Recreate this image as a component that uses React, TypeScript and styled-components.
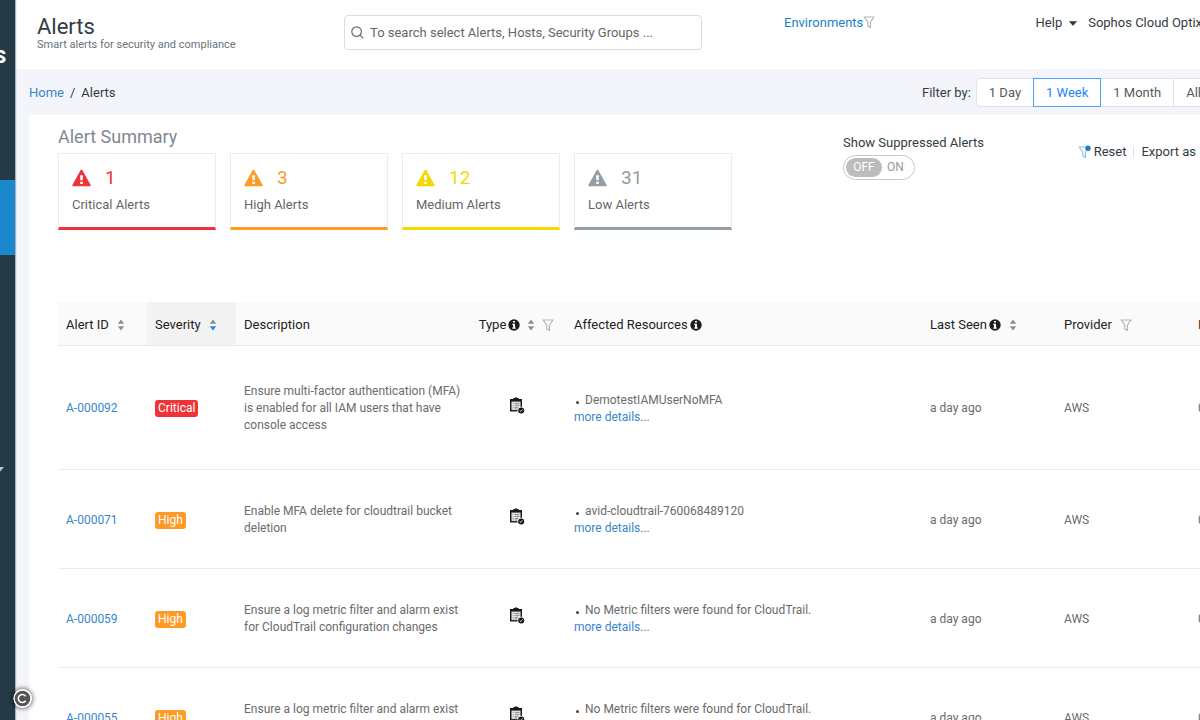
import React, { useState } from "react";
import styled, { createGlobalStyle } from "styled-components";

const GlobalStyle = createGlobalStyle`
  *, *::before, *::after { box-sizing: border-box; }
  html, body { margin: 0; background: #f3f5fa; overflow: hidden; }
  body { font-family: Roboto, "Liberation Sans", sans-serif; font-size: 13px; color: #333c44; }
  button, input { font: inherit; color: inherit; }
  a { color: #3886cb; text-decoration: none; }
  h1, h2, p, ul { margin: 0; padding: 0; font-weight: 400; }
`;

const Shell = styled.div`
  display: flex;
  height: 100vh;
  overflow: hidden;
`;

const Sidebar = styled.nav`
  flex: 0 0 15px;
  display: flex;
  flex-direction: column;
  overflow: hidden;
  background: #243a47;
  box-shadow: 1px 0 1px #a9b2bb;
  z-index: 1;
`;

const Brand = styled.div`
  height: 180px;
  padding: 45px 9px 0 0;
  display: flex;
  justify-content: flex-end;
  color: #fff;
  font-size: 18px;
  line-height: 24px;
  font-weight: 900;
`;

const ActiveItem = styled.a`
  height: 75px;
  background: #1b87cc;
`;

const SideCaret = styled.svg`
  width: 10px;
  height: 6px;
  margin: 212px 0 0 -6px;
`;

const Main = styled.main`
  flex: 0 0 auto;
  width: calc(100% + 33px);
`;

const Header = styled.header`
  display: flex;
  height: 69px;
  padding: 15px 31px 0 22px;
  background: #fff;
`;

const TitleBlock = styled.div`
  flex: 0 0 307px;
`;

const Title = styled.h1`
  font-size: 22px;
  line-height: 24px;
`;

const Subtitle = styled.p`
  font-size: 11px;
  line-height: 12px;
  color: #6b737b;
`;

const SearchBox = styled.label`
  flex: 0 1 358px;
  display: flex;
  align-items: center;
  gap: 6px;
  height: 35px;
  padding: 0 6px;
  border: 1px solid #dcdcdc;
  border-radius: 4px;
`;

const SearchInput = styled.input`
  flex: 1;
  min-width: 0;
  padding: 0;
  border: 0;
  outline: 0;
  background: none;
  &::placeholder { color: #666; opacity: 1; }
`;

const EnvironmentLink = styled.a`
  display: flex;
  height: 16px;
  line-height: 16px;
  margin-left: 82px;
  color: #1b7fc9;
`;

const HeaderMenu = styled.div`
  display: flex;
  gap: 11px;
  height: 16px;
  margin-left: auto;
`;

const MenuButton = styled.button`
  display: flex;
  align-items: center;
  gap: 7px;
  padding: 0;
  border: 0;
  background: none;
  line-height: 16px;
  white-space: nowrap;
`;

const CrumbBar = styled.div`
  display: flex;
  align-items: center;
  justify-content: space-between;
  height: 46px;
  padding: 0 34px 0 14px;
`;

const Crumbs = styled.nav`
  display: flex;
  gap: 6px;
`;

const FilterGroup = styled.div`
  display: flex;
  align-items: center;
  gap: 6px;
`;

const Segments = styled.div`
  display: flex;
`;

const Segment = styled.button<{ $active?: boolean }>`
  height: 29px;
  padding: 0 12px;
  margin-left: -1px;
  border: 1px solid ${(p) => (p.$active ? "#4da3ff" : "#e0e2e6")};
  background: #fff;
  color: ${(p) => (p.$active ? "#1f86f7" : "#595959")};
  position: relative;
  z-index: ${(p) => (p.$active ? 1 : 0)};
  &:first-child { border-radius: 4px 0 0 4px; }
  &:last-child { border-radius: 0 4px 4px 0; }
`;

const Panel = styled.section`
  margin-left: 14px;
  padding: 11px 0 0 29px;
  background: #fff;
`;

const Overview = styled.div`
  display: flex;
  padding-right: 52px;
`;

const Summary = styled.div`
  flex: 0 0 785px;
`;

const SummaryTitle = styled.h2`
  font-size: 18px;
  line-height: 22px;
  margin-bottom: 5px;
  color: #7f8890;
`;

const Cards = styled.div`
  display: flex;
  gap: 14px;
`;

const Card = styled.div<{ $color: string }>`
  width: 158px;
  height: 77px;
  padding: 13px 13px 0;
  border: 1px solid #ececec;
  border-bottom: 3px solid ${(p) => p.$color};
  color: ${(p) => p.$color};
`;

const CardCount = styled.div`
  display: flex;
  align-items: center;
  gap: 14px;
  font-size: 19px;
  line-height: 22px;
`;

const CardLabel = styled.div`
  margin-top: 7px;
  line-height: 18px;
  color: #666;
`;

const Suppressed = styled.label`
  padding-top: 8px;
  line-height: 18px;
`;

const SwitchTrack = styled.span`
  display: flex;
  align-items: center;
  width: 72px;
  height: 25px;
  margin-top: 3px;
  padding: 2px;
  border: 1px solid #c8c8c8;
  border-radius: 13px;
  font-size: 12px;
`;

const SwitchInput = styled.input`
  position: absolute;
  opacity: 0;
`;

const SwitchOption = styled.span<{ $on: boolean }>`
  flex: ${(p) => (p.$on ? "0 0 36px" : "0 0 27px")};
  height: 19px;
  line-height: 19px;
  border-radius: 10px;
  text-align: center;
  background: ${(p) => (p.$on ? "#bcbcbc" : "none")};
  color: ${(p) => (p.$on ? "#fff" : "#999")};
`;

const Actions = styled.div`
  display: flex;
  align-items: center;
  height: 16px;
  margin: 18px 0 0 auto;
`;

const Divider = styled.span`
  width: 1px;
  height: 12px;
  margin: 0 7px;
  background: #e4e4e4;
`;

const ActionButton = styled(MenuButton)`
  gap: 3px;
`;

const Table = styled.table`
  width: 100%;
  margin-top: 72px;
  table-layout: fixed;
  border-collapse: separate;
  border-spacing: 0;
`;

const Th = styled.th<{ $width?: number; $sorted?: boolean }>`
  width: ${(p) => (p.$width ? `${p.$width}px` : "auto")};
  height: 44px;
  padding: 2px 8px 0;
  text-align: left;
  font-weight: 400;
  color: #222;
  background: ${(p) => (p.$sorted ? "#f3f3f3" : "#fafafa")};
  border-bottom: 1px solid #e9e9e9;
  white-space: nowrap;
  overflow: hidden;
`;

const HeadCell = styled.div<{ $center?: boolean; $gap?: number }>`
  display: flex;
  align-items: center;
  justify-content: ${(p) => (p.$center ? "center" : "flex-start")};
  gap: ${(p) => p.$gap ?? 8}px;
`;

const WithInfo = styled.span`
  display: flex;
  align-items: center;
  gap: 2px;
`;

const Td = styled.td<{ $tall?: boolean }>`
  height: ${(p) => (p.$tall ? 124 : 99)}px;
  padding: 2px 0 0 8px;
  font-size: 12px;
  line-height: 17px;
  color: #6b6b6b;
  border-bottom: 1px solid #ececec;
  overflow: hidden;
`;

const IconTd = styled(Td)`
  padding: 0;
  text-align: center;
`;

const Description = styled.p`
  max-width: 222px;
`;

const Tag = styled.span<{ $color: string }>`
  display: inline-block;
  height: 17px;
  padding: 0 3px;
  border-radius: 3px;
  background: ${(p) => p.$color};
  color: #fff;
  vertical-align: middle;
`;

const Resources = styled.ul`
  list-style: none;
`;

const Resource = styled.li`
  display: flex;
  align-items: center;
  gap: 6px;
  &::before {
    content: "";
    width: 3px;
    height: 3px;
    margin: 4px 0 0 2px;
    border-radius: 50%;
    background: #444;
  }
`;

const Copyright = styled.div`
  position: fixed;
  left: 13px;
  bottom: 12px;
  z-index: 2;
`;

const CopyrightMark = styled.svg`
  display: block;
  border-radius: 50%;
  box-shadow: 0 0 4px 1px rgba(0, 0, 0, 0.55);
`;

const Funnel = ({ color = "#b5b5b5", dot = false }: { color?: string; dot?: boolean }) => (
  <svg width="13" height="14" viewBox="0 0 13 14" fill="none" aria-hidden="true">
    <path d="M1.2 2h9.8L7.5 7v5.6L4.8 11V7z" stroke={color} strokeWidth="1.2" strokeLinejoin="round" />
    {dot && <circle cx="10" cy="3.3" r="2.7" fill="#1b7fc9" />}
  </svg>
);

const Sorter = ({ desc = false }: { desc?: boolean }) => (
  <svg width="8" height="12" viewBox="0 0 8 12" aria-hidden="true">
    <path d="M4 .6 7.2 4.8H.8z" fill="#8c8c8c" />
    <path d="M4 11.4 7.2 7.2H.8z" fill={desc ? "#1f86f7" : "#8c8c8c"} />
  </svg>
);

const Info = () => (
  <svg width="12" height="12" viewBox="0 0 12 12" aria-hidden="true">
    <circle cx="6" cy="6" r="5.7" fill="#1d1d1d" />
    <path d="M5 1.9h2v1.7H5zM4.3 4.8H7v3.6h.8v1.3H4.3V8.4H5V6.1h-.7z" fill="#fff" />
  </svg>
);

const Warning = () => (
  <svg width="19" height="18" viewBox="0 0 19 18" aria-hidden="true">
    <path d="M9.5 1.4 17.8 16.4H1.2z" fill="currentColor" stroke="currentColor" strokeWidth="1.8" strokeLinejoin="round" />
    <path d="M8 6.2h3l-.4 5.1H8.4zM8.2 12.7h2.6v2.4H8.2z" fill="#fff" />
  </svg>
);

const Caret = () => (
  <svg width="8" height="5" viewBox="0 0 8 5" aria-hidden="true">
    <path d="M.4.4h7.2L4 4.6z" fill="#243a47" stroke="#243a47" strokeWidth=".6" strokeLinejoin="round" />
  </svg>
);

const SearchIcon = () => (
  <svg width="13" height="13" viewBox="0 0 13 13" fill="none" stroke="#6d6d6d" strokeWidth="1.2" aria-hidden="true">
    <circle cx="5.6" cy="5.6" r="4.8" />
    <path d="m9 9 3.4 3.4" />
  </svg>
);

const Clipboard = () => (
  <svg width="16" height="17" viewBox="0 0 16 17" aria-label="Compliance alert" role="img">
    <path d="M1 2h3.4V1h1.4a1.3 1.3 0 0 1 2.4 0h1.4v1H13v12.5H1z" fill="#1a1a1a" />
    <path d="M2.5 4.6h9v8.5h-9z" fill="#efefef" />
    <path d="M3.6 6.3h1M5.6 6.3h5M3.6 8.3h1M5.6 8.3h5M3.6 10.3h1M5.6 10.3h4M3.6 12h1M5.6 12h3" stroke="#666" strokeWidth=".8" />
    <circle cx="12.2" cy="13.4" r="3.7" fill="#fff" />
    <circle cx="12.2" cy="13.4" r="3" fill="#111" />
    <path d="m10.7 13.5 1.1 1 1.9-2.1" fill="none" stroke="#fff" strokeWidth=".9" />
  </svg>
);

const severityColors = { Critical: "#ee3439", High: "#ff9a26", Medium: "#f5d800", Low: "#929da5" };

const cards = [
  { level: "Critical", count: 1 },
  { level: "High", count: 3 },
  { level: "Medium", count: 12 },
  { level: "Low", count: 31 },
] as const;

const alerts = [
  { id: "A-000092", severity: "Critical", text: "Ensure multi-factor authentication (MFA) is enabled for all IAM users that have console access", resource: "DemotestIAMUserNoMFA", tall: true },
  { id: "A-000071", severity: "High", text: "Enable MFA delete for cloudtrail bucket deletion", resource: "avid-cloudtrail-760068489120" },
  { id: "A-000059", severity: "High", text: "Ensure a log metric filter and alarm exist for CloudTrail configuration changes", resource: "No Metric filters were found for CloudTrail." },
  { id: "A-000055", severity: "High", text: "Ensure a log metric filter and alarm exist for CloudTrail configuration changes", resource: "No Metric filters were found for CloudTrail." },
] as { id: string; severity: "Critical" | "High"; text: string; resource: string; tall?: boolean }[];

const periods = ["1 Day", "1 Week", "1 Month", "All"];

export default function App() {
  const [period, setPeriod] = useState("1 Week");
  const [suppressed, setSuppressed] = useState(false);

  return (
    <>
      <GlobalStyle />
      <Shell>
        <Sidebar aria-label="Main">
          <Brand>S</Brand>
          <ActiveItem href="#alerts" aria-label="Alerts" />
          <SideCaret viewBox="0 0 10 6" aria-hidden="true">
            <path d="M0 0h10L5 6z" fill="#b9c0c5" />
          </SideCaret>
        </Sidebar>
        <Main>
          <Header>
            <TitleBlock>
              <Title>Alerts</Title>
              <Subtitle>Smart alerts for security and compliance</Subtitle>
            </TitleBlock>
            <SearchBox>
              <SearchIcon />
              <SearchInput aria-label="Search" placeholder="To search select Alerts, Hosts, Security Groups ..." />
            </SearchBox>
            <EnvironmentLink href="#environments">
              Environments
              <Funnel />
            </EnvironmentLink>
            <HeaderMenu>
              <MenuButton>Help <Caret /></MenuButton>
              <MenuButton>Sophos Cloud Optix <Caret /></MenuButton>
            </HeaderMenu>
          </Header>
          <CrumbBar>
            <Crumbs aria-label="Breadcrumb">
              <a href="#home">Home</a>
              <span>/</span>
              <span>Alerts</span>
            </Crumbs>
            <FilterGroup>
              <span>Filter by:</span>
              <Segments>
                {periods.map((p) => (
                  <Segment key={p} $active={p === period} onClick={() => setPeriod(p)}>{p}</Segment>
                ))}
              </Segments>
            </FilterGroup>
          </CrumbBar>
          <Panel>
            <Overview>
              <Summary>
                <SummaryTitle>Alert Summary</SummaryTitle>
                <Cards>
                  {cards.map((c) => (
                    <Card key={c.level} $color={severityColors[c.level]}>
                      <CardCount><Warning />{c.count}</CardCount>
                      <CardLabel>{c.level} Alerts</CardLabel>
                    </Card>
                  ))}
                </Cards>
              </Summary>
              <Suppressed>
                Show Suppressed Alerts
                <SwitchInput type="checkbox" checked={suppressed} onChange={(e) => setSuppressed(e.target.checked)} />
                <SwitchTrack>
                  <SwitchOption $on={!suppressed}>OFF</SwitchOption>
                  <SwitchOption $on={suppressed}>ON</SwitchOption>
                </SwitchTrack>
              </Suppressed>
              <Actions>
                <ActionButton><Funnel color="#8fbfe3" dot />Reset</ActionButton>
                <Divider />
                <ActionButton>Export as</ActionButton>
              </Actions>
            </Overview>
            <Table>
              <thead>
                <tr>
                  <Th $width={89}><HeadCell>Alert ID <Sorter /></HeadCell></Th>
                  <Th $width={89} $sorted><HeadCell>Severity <Sorter desc /></HeadCell></Th>
                  <Th $width={232}>Description</Th>
                  <Th $width={98}><HeadCell $center $gap={7}><WithInfo>Type <Info /></WithInfo><Sorter /><Funnel /></HeadCell></Th>
                  <Th $width={356}><WithInfo>Affected Resources <Info /></WithInfo></Th>
                  <Th $width={134}><HeadCell><WithInfo>Last Seen <Info /></WithInfo><Sorter /></HeadCell></Th>
                  <Th $width={134}><HeadCell>Provider <Funnel /></HeadCell></Th>
                  <Th>I</Th>
                </tr>
              </thead>
              <tbody>
                {alerts.map((a) => (
                  <tr key={a.id}>
                    <Td $tall={a.tall}><a href={`#${a.id}`}>{a.id}</a></Td>
                    <Td><Tag $color={severityColors[a.severity]}>{a.severity}</Tag></Td>
                    <Td><Description>{a.text}</Description></Td>
                    <IconTd><Clipboard /></IconTd>
                    <Td>
                      <Resources><Resource>{a.resource}</Resource></Resources>
                      <a href={`#${a.id}-details`}>more details...</a>
                    </Td>
                    <Td>a day ago</Td>
                    <Td>AWS</Td>
                    <Td>0</Td>
                  </tr>
                ))}
              </tbody>
            </Table>
          </Panel>
        </Main>
        <Copyright>
          <CopyrightMark width="19" height="19" viewBox="0 0 19 19" role="img" aria-label="Copyright">
            <circle cx="9.5" cy="9.5" r="8.5" fill="#555" stroke="#fff" strokeWidth="1.4" />
            <path d="M12.6 7.2a4 4 0 1 0 0 4.6" fill="none" stroke="#fff" strokeWidth="1.6" />
          </CopyrightMark>
        </Copyright>
      </Shell>
    </>
  );
}
